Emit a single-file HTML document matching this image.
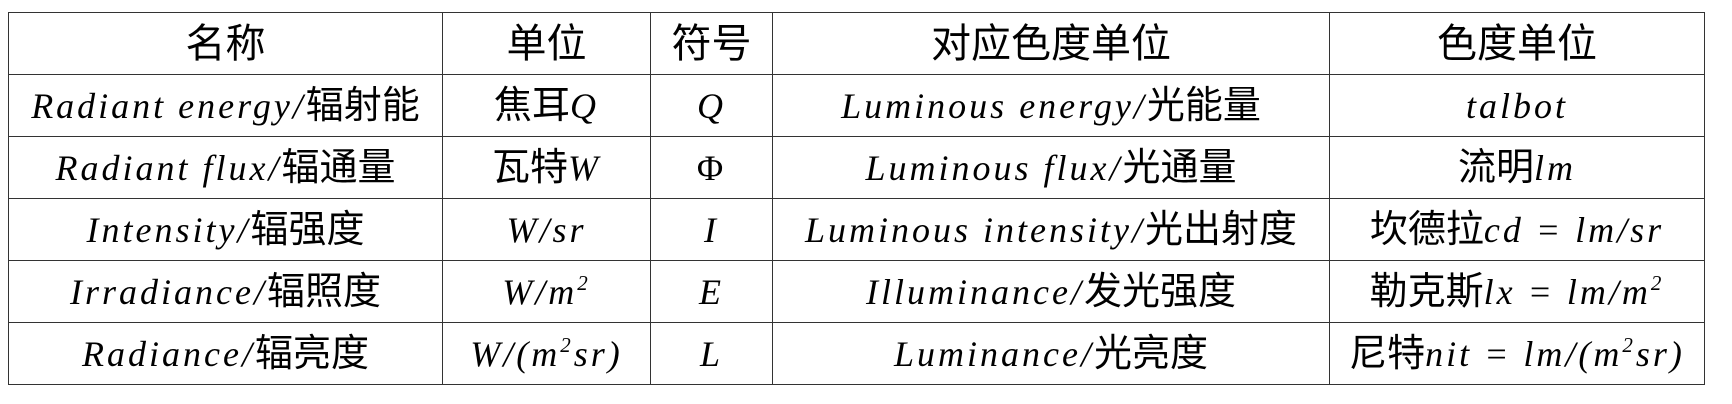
<!DOCTYPE html>
<html><head><meta charset="utf-8"><style>
html,body{margin:0;padding:0;background:#fff;width:1732px;height:404px;overflow:hidden}
table{position:absolute;left:8px;top:12px;border-collapse:collapse;table-layout:fixed;width:1696px}
td{border:1.5px solid #333;height:61px;padding:0;text-align:center;vertical-align:middle;white-space:nowrap;
font-family:"Liberation Sans","Noto Sans CJK SC",sans-serif;font-size:38px;color:#000;line-height:1}
tr.h td{height:61px;font-size:40px}
i{font-family:"Liberation Serif",serif;font-style:italic;font-size:36px;letter-spacing:3px}
sup{font-size:21px;vertical-align:14px}
</style></head><body>
<table>
<col style="width:434px"><col style="width:208px"><col style="width:122px"><col style="width:557px"><col style="width:375px">
<tr class="h"><td>名称</td><td>单位</td><td>符号</td><td>对应色度单位</td><td>色度单位</td></tr>
<tr><td><i>Radiant energy/</i>辐射能</td><td>焦耳<i>Q</i></td><td><i>Q</i></td><td><i>Luminous energy/</i>光能量</td><td><i>talbot</i></td></tr>
<tr><td><i>Radiant flux/</i>辐通量</td><td>瓦特<i>W</i></td><td><i style="font-style:normal">Φ</i></td><td><i>Luminous flux/</i>光通量</td><td>流明<i>lm</i></td></tr>
<tr><td><i>Intensity/</i>辐强度</td><td><i>W/sr</i></td><td><i>I</i></td><td><i>Luminous intensity/</i>光出射度</td><td>坎德拉<i>cd = lm/sr</i></td></tr>
<tr><td><i>Irradiance/</i>辐照度</td><td><i>W/m<sup>2</sup></i></td><td><i>E</i></td><td><i>Illuminance/</i>发光强度</td><td>勒克斯<i>lx = lm/m<sup>2</sup></i></td></tr>
<tr><td><i>Radiance/</i>辐亮度</td><td><i>W/(m<sup>2</sup>sr)</i></td><td><i>L</i></td><td><i>Luminance/</i>光亮度</td><td>尼特<i>nit = lm/(m<sup>2</sup>sr)</i></td></tr>
</table>
</body></html>
